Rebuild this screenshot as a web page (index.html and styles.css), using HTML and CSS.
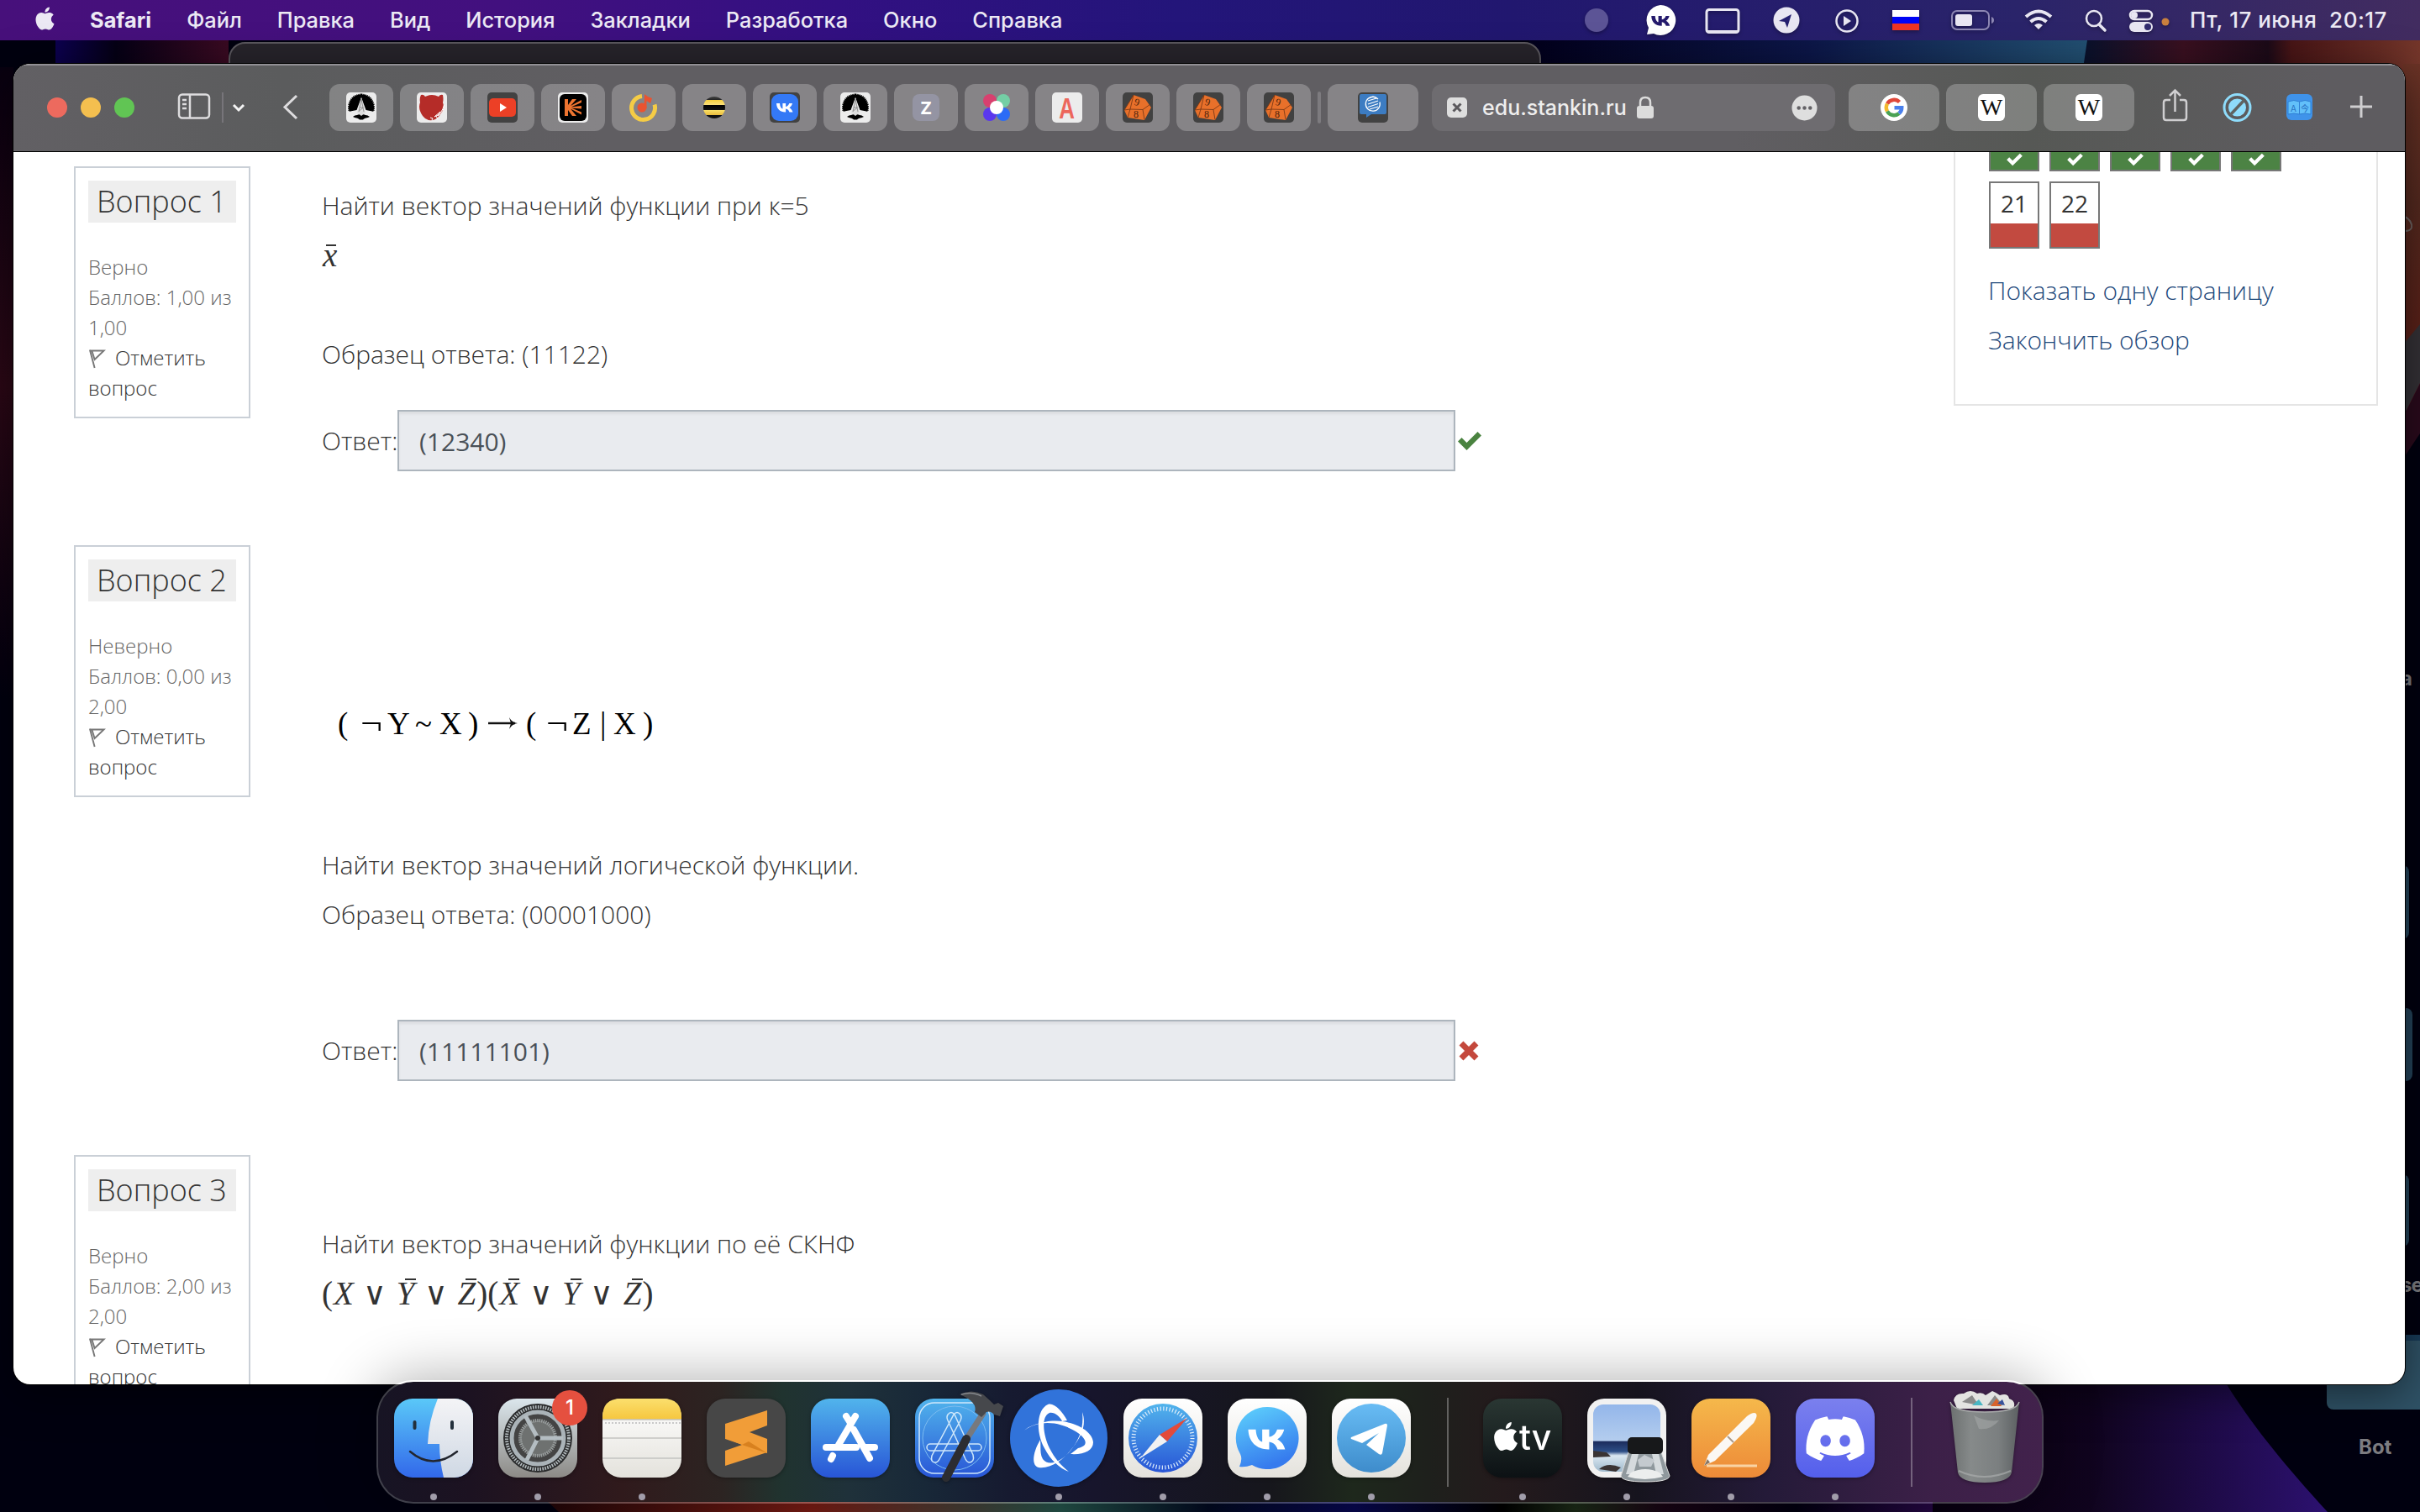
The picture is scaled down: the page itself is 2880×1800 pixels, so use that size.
FILE: index.html
```html
<!DOCTYPE html>
<html lang="ru">
<head>
<meta charset="utf-8">
<title>edu.stankin.ru</title>
<link rel="stylesheet" href="styles.css">
</head>
<body>
<svg class="defs" width="0" height="0">
  <defs>
    <linearGradient id="finderL" x2="0" y2="1"><stop stop-color="#5ac8f8"/><stop offset="1" stop-color="#3268ea"/></linearGradient>
    <linearGradient id="finderR" x2="0" y2="1"><stop stop-color="#f4f4f6"/><stop offset="1" stop-color="#cfd8e4"/></linearGradient>
    <linearGradient id="prefs" x2="0" y2="1"><stop stop-color="#dbe6ec"/><stop offset="1" stop-color="#8c8a86"/></linearGradient>
    <linearGradient id="yellow" x2="0" y2="1"><stop stop-color="#fbdf6d"/><stop offset="1" stop-color="#f6c63e"/></linearGradient>
    <linearGradient id="paper" x2="0" y2="1"><stop stop-color="#fff"/><stop offset="1" stop-color="#e4e2dc"/></linearGradient>
    <linearGradient id="blue" x2="0" y2="1"><stop stop-color="#51b4ec"/><stop offset="1" stop-color="#2855d6"/></linearGradient>
    <linearGradient id="vkblue" x2=".4" y2="1"><stop stop-color="#5fd4fd"/><stop offset="1" stop-color="#367bee"/></linearGradient>
    <linearGradient id="tgblue" x2="0" y2="1"><stop stop-color="#68bcf4"/><stop offset="1" stop-color="#3e8ccb"/></linearGradient>
    <linearGradient id="tvbg" x2="0" y2="1"><stop stop-color="#2a3733"/><stop offset="1" stop-color="#0c1114"/></linearGradient>
    <linearGradient id="orange" x2="0" y2="1"><stop stop-color="#f5b84b"/><stop offset="1" stop-color="#ed8a38"/></linearGradient>
    <linearGradient id="blurple" x2="0" y2="1"><stop stop-color="#7b80ee"/><stop offset="1" stop-color="#545fec"/></linearGradient>
    <linearGradient id="bin" x2="1" y2="0"><stop stop-color="#6c7070"/><stop offset=".3" stop-color="#868a8a"/><stop offset=".7" stop-color="#7b7f80"/><stop offset="1" stop-color="#5c6062"/></linearGradient>
    <linearGradient id="sky" x2="0" y2="1"><stop stop-color="#93b6ea"/><stop offset=".54" stop-color="#b4cdee"/><stop offset=".55" stop-color="#1c2c5c"/><stop offset=".7" stop-color="#2d4e86"/><stop offset=".76" stop-color="#dbe8f2"/><stop offset="1" stop-color="#9fb9cc"/></linearGradient>
    <linearGradient id="bee" x2="0" y2="1"><stop stop-color="#444"/><stop offset=".16" stop-color="#222"/><stop offset=".16" stop-color="#f7d13f"/><stop offset=".38" stop-color="#fbe07a"/><stop offset=".38" stop-color="#000"/><stop offset=".6" stop-color="#111"/><stop offset=".6" stop-color="#fbe36a"/><stop offset=".86" stop-color="#e8b93a"/><stop offset=".86" stop-color="#111"/></linearGradient>
    <symbol id="apple" viewBox="0 0 24 24"><path fill="currentColor" d="M12.152 6.896c-.948 0-2.415-1.078-3.96-1.04-2.04.027-3.91 1.183-4.961 3.014-2.117 3.675-.546 9.103 1.519 12.09 1.013 1.454 2.208 3.09 3.792 3.039 1.52-.065 2.09-.987 3.935-.987 1.831 0 2.35.987 3.96.948 1.637-.026 2.676-1.48 3.676-2.948 1.156-1.688 1.636-3.325 1.662-3.415-.039-.013-3.182-1.221-3.22-4.857-.026-3.04 2.48-4.494 2.597-4.559-1.429-2.09-3.623-2.324-4.39-2.376-2-.156-3.675 1.09-4.61 1.09zM15.53 3.83c.843-1.012 1.4-2.427 1.245-3.83-1.207.052-2.662.805-3.532 1.818-.78.896-1.454 2.338-1.273 3.714 1.338.104 2.715-.688 3.559-1.701"/></symbol>
    <symbol id="vk" viewBox="0 0 24 24"><path fill="currentColor" d="M2 7h4c.2 4.2 1.9 6.2 3.4 6.6V7h3.7v3.9c2.3-.3 3.6-2 4.2-3.9h3.7c-.6 2.4-2 4.3-3.6 5.2 1.6.8 3.4 2.5 4.1 5.3h-4c-.7-2.1-2.2-3.6-4.4-3.9v3.9h-.5C6.5 17.5 2.2 13.6 2 7z"/></symbol>
    <symbol id="stankin" viewBox="0 0 36 36"><rect width="36" height="36" rx="5" fill="#ececec"/><path d="M18 2.500C8.500 2.500 3 10 3 18c0 2 .4 3.500.8 4.800L12.500 21 18 6l5.500 15 8.700 1.800c.4-1.300.8-2.800.8-4.800 0-8-5.500-15.500-15-15.500z"/><path d="M18 2.500C8.500 2.500 3 10 3 18c0 2 .4 3.500.8 4.800M18 2.500c9.500 0 15 7.500 15 15.500 0 2-.4 3.500-.8 4.800" fill="none" stroke="#000" stroke-width="2" stroke-dasharray="1.200 1"/><path d="M8 29c3-2.500 7-2 10-3.500 3 1.500 7 1 10 3.500-3 2-6 1-8 3.500h-4c-2-2.500-5-1.500-8-3.500z"/><path d="M18 6l-5 18 5 4 5-4z" fill="#ddd"/><path d="M18 8l-3 15M18 8l3 15M16 18h4M15.500 22l5-4" stroke="#777" stroke-width=".7"/></symbol>
    <symbol id="dice" viewBox="0 0 36 36"><rect width="36" height="36" rx="5" fill="#414141"/><path d="M13 3l14 5 7 10-8 15-20-3-4-9z" fill="#e8702a"/><path d="M13 3L9 20l-7 1M9 20l15 .5L33 14M24 20.500l2 12M9 20l-3 10M13 3l-3 5-8 13" fill="none" stroke="#6e3414" stroke-width=".8"/><text x="14" y="15.500" class="pip" transform="rotate(14 17 12)">9</text><text x="13" y="30" class="pip">8</text></symbol>
    <symbol id="flag" viewBox="0 0 22 26"><path d="M2 1.500L8 24M2.500 2.500h17L8 13.500 4.500 2.500" fill="none" stroke="#777" stroke-width="2"/></symbol>
    <symbol id="check" viewBox="0 0 30 24"><path fill="currentColor" d="M1 12.500l4.500-4.500 6 6L24.500 1l4.500 4.500-17.500 17.500z"/></symbol>
  </defs>
</svg>

<div class="desktop">
  <svg class="wallpaper" viewBox="0 0 2880 1800">
    <defs>
      <linearGradient id="w1" x2="1" y2="0"><stop stop-color="#02001c"/><stop offset=".5" stop-color="#0c1648"/><stop offset="1" stop-color="#225072"/></linearGradient>
      <linearGradient id="w2" x2="1" y2="0"><stop stop-color="#08112c"/><stop offset=".3" stop-color="#3a1020"/><stop offset=".55" stop-color="#1c0a18"/><stop offset=".62" stop-color="#481516"/><stop offset="1" stop-color="#74362a"/></linearGradient>
      <linearGradient id="w3" x2="0" y2="1"><stop stop-color="#6b3326"/><stop offset=".5" stop-color="#54291f"/><stop offset="1" stop-color="#5a2018"/></linearGradient>
      <linearGradient id="w4" x2="1" y2="0"><stop stop-color="#080010"/><stop offset=".4" stop-color="#10041e"/><stop offset="1" stop-color="#2c1170"/></linearGradient>
      <linearGradient id="w5" x2="1" y2="0"><stop stop-color="#0c0050"/><stop offset=".35" stop-color="#050015"/><stop offset="1" stop-color="#3a0a22"/></linearGradient>
      <linearGradient id="w6" x2="1" y2="0"><stop stop-color="#210608"/><stop offset=".18" stop-color="#7a1c14"/><stop offset=".35" stop-color="#24534a"/><stop offset=".45" stop-color="#020a20"/><stop offset=".55" stop-color="#080850"/><stop offset=".65" stop-color="#000"/><stop offset=".7" stop-color="#1c2b18"/><stop offset=".76" stop-color="#180414"/><stop offset=".85" stop-color="#020010"/><stop offset=".95" stop-color="#280848"/><stop offset="1" stop-color="#5c3a78"/></linearGradient>
      <linearGradient id="w7" x2="0" y2="1"><stop stop-color="#080010"/><stop offset=".5" stop-color="#2c0816"/><stop offset="1" stop-color="#00000f"/></linearGradient>
    </defs>
    <rect width="2880" height="1800" fill="#00000f"/>
    <rect y="80" width="16" height="760" fill="url(#w7)"/>
    <rect x="66" y="48" width="206" height="40" fill="url(#w5)"/>
    <rect x="1820" y="48" width="664" height="40" fill="url(#w1)"/>
    <path d="M2484 48h396v440h-18V88h-384z" fill="url(#w2)"/>
    <rect x="2860" y="76" width="20" height="330" fill="url(#w3)"/>
    <path d="M2860 410l20-24v70l-20 40z" fill="#343136"/>
    <path d="M2860 496l20-40v60l-20 30z" fill="#2a0a1c"/>
    <path d="M650 1786h1750v14H665z" fill="url(#w6)"/>
    <path d="M2300 1640h345c30 50 70 100 125 160h-470z" fill="url(#w4)"/>
    <g fill="#24435a"><rect x="2840" y="1030" width="27" height="88" rx="8"/><rect x="2840" y="1200" width="31" height="87" rx="8"/><rect x="2840" y="1398" width="27" height="86" rx="8"/></g>
    <rect x="2769" y="1589" width="130" height="89" rx="8" fill="#2f5266"/><rect x="2769" y="1589" width="130" height="7" fill="#183b58"/>
    <path d="M2862 258c5 2 9 8 8 13-1 3-4 4-8 4" fill="none" stroke="#6d6462" stroke-width="2"/>
  </svg>
  <span class="file-label file-a">a</span>
  <span class="file-label file-se">se</span>
  <span class="file-label file-bot">Bot</span>

  <header class="menubar">
    <svg class="mb-apple"><use href="#apple"/></svg>
    <nav class="menus"><b>Safari</b><span>Файл</span><span>Правка</span><span>Вид</span><span>История</span><span>Закладки</span><span>Разработка</span><span>Окно</span><span>Справка</span></nav>
    <svg class="status" viewBox="1880 0 710 48">
      <circle cx="1900" cy="24" r="14" fill="#5c5496"/>
      <g fill="#fff"><path d="M1976 6a18 18 0 1 1-8 34l-8 1 2-8a18 18 0 0 1 14-27z"/></g>
      <svg x="1963" y="11" width="27" height="27" color="#241a6c"><use href="#vk"/></svg>
      <rect x="2031" y="11.500" width="38" height="27" rx="3" fill="none" stroke="#e8e6f2" stroke-width="3"/><path d="M2032 36h36v3h-36z" fill="#e8e6f2"/>
      <circle cx="2126" cy="24" r="15.500" fill="#e8e6f2"/><path d="M2117 25l15-8-5 16-3-7z" fill="#241f70"/>
      <circle cx="2198" cy="25" r="12.500" fill="none" stroke="#e8e6f2" stroke-width="2.500"/><path d="M2194 19v12l9-6z" fill="#e8e6f2"/>
      <path d="M2252 12h32v8h-32z" fill="#fff"/><path d="M2252 20h32v8h-32z" fill="#0004f4"/><path d="M2252 28h32v8h-32z" fill="#ee3424"/>
      <rect x="2323" y="13" width="44" height="22" rx="6" fill="none" stroke="#8d87b4" stroke-width="2"/><rect x="2327" y="17" width="20" height="14" rx="3" fill="#e8e6f2"/><path d="M2370 20v8q3-1 3-4t-3-4" fill="#8d87b4"/>
      <g fill="none" stroke="#e8e6f2" stroke-width="4"><path d="M2411 20q15-13 30 0M2416.500 26q9.500-8 19 0"/></g><path d="M2421 30q5-4 10 0l-5 5z" fill="#e8e6f2"/>
      <circle cx="2492" cy="22" r="9" fill="none" stroke="#e8e6f2" stroke-width="2.500"/><path d="M2498 29l7 7" stroke="#e8e6f2" stroke-width="3.500" stroke-linecap="round"/>
      <rect x="2535" y="13" width="26" height="10" rx="5" fill="none" stroke="#e8e6f2" stroke-width="2.500"/><circle cx="2540" cy="18" r="4" fill="#e8e6f2"/><rect x="2534" y="26" width="28" height="12" rx="6" fill="#e8e6f2"/><circle cx="2556" cy="32" r="4" fill="#312b6e"/>
      <circle cx="2577" cy="26" r="4.500" fill="#c9803e"/>
    </svg>
    <time class="clock">Пт, 17 июня&nbsp; 20:17</time>
  </header>

  <div class="back-window"></div>

  <main class="window">
    <div class="toolbar">
      <div class="lights"><i class="red"></i><i class="amber"></i><i class="green"></i></div>
      <svg class="nav-icons" viewBox="206 100 186 56" fill="none" stroke="#dddcde" stroke-width="2.500">
        <rect x="213" y="112.500" width="36" height="28" rx="4"/><path d="M226 112v29M217 119h5M217 124h5M217 129h5"/><path d="M265 110v36" stroke="#77757a" stroke-width="2"/><path d="M278 125l6 6 6-6" stroke="#f4f4f4" stroke-width="3"/><path d="M353 114l-14 13.500 14 13.500" stroke-width="3"/>
      </svg>
      <div class="tabs">
        <div class="tab"><svg class="fav"><use href="#stankin"/></svg></div>
        <div class="tab"><svg class="fav" viewBox="0 0 36 36"><rect width="36" height="36" rx="5" fill="#ececec"/><path d="M5 3q3-1 5 2 8-4 16 0 2-3 5-2 1 5 0 9 2 6 0 10-4 7-9 10-9 4-15-4Q1 19 4 12 3 7 5 3z" fill="#b52c28"/><path d="M32.500 15q0 9-7.500 13l3-5-7 6q9-3 11.500-14M16 30l3 1-1 2M23 28l2 4" fill="#b52c28" stroke="#fff"/></svg></div>
        <div class="tab"><svg class="fav" viewBox="0 0 36 36"><rect width="36" height="36" rx="5" fill="#424242"/><rect x="2" y="7" width="32" height="22" rx="5" fill="#ec4026"/><path d="M15 13v10l8-5z" fill="#fff"/></svg></div>
        <div class="tab"><svg class="fav" viewBox="0 0 36 36"><rect width="36" height="36" rx="5" fill="#ececec"/><rect x="2" y="2" width="32" height="32" rx="6"/><path fill="#ee7430" d="M8 8h4v7l5-7h5l-7 8 13-7v3l-12 5.200 12-1.200v3.600l-12-1.200 12 5.200v3l-13-7 7 8.500h-5l-5-7v7H8z"/></svg></div>
        <div class="tab"><svg class="fav" viewBox="0 0 36 36"><path d="M16 4.500a14 14 0 1 0 15 10" fill="none" stroke="#f5cc45" stroke-width="5"/><circle cx="16" cy="18" r="5.500" fill="#ea5330"/><path d="M19 2q4 4 9 5l-2 6q-3-2-4.500-3v9h-3z" fill="#ea5330"/></svg></div>
        <div class="tab"><svg class="fav" viewBox="0 0 36 36"><circle cx="18" cy="18" r="13" fill="url(#bee)"/></svg></div>
        <div class="tab"><svg class="fav" viewBox="0 0 36 36"><rect width="36" height="36" rx="5" fill="#424242"/><rect x="2" y="2" width="32" height="32" rx="9" fill="#3479f6"/><svg x="6" y="6" width="24" height="24" color="#fff"><use href="#vk"/></svg></svg></div>
        <div class="tab"><svg class="fav"><use href="#stankin"/></svg></div>
        <div class="tab"><svg class="fav" viewBox="0 0 36 36"><rect x="2" y="2" width="32" height="32" rx="8" fill="#9494a3"/><text x="18" y="26" class="let z">Z</text></svg></div>
        <div class="tab"><svg class="fav" viewBox="0 0 36 36"><circle cx="10" cy="10" r="8" fill="#d8406f"/><circle cx="26" cy="10" r="8" fill="#74cfa5"/><circle cx="10" cy="26" r="8" fill="#5a37ee"/><circle cx="26" cy="26" r="8" fill="#2c6bf6"/><circle cx="18" cy="18" r="8" fill="#fff"/></svg></div>
        <div class="tab"><svg class="fav" viewBox="0 0 36 36"><rect width="36" height="36" rx="5" fill="#ececec"/><text x="17.500" y="31" class="let a">A</text></svg></div>
        <div class="tab"><svg class="fav"><use href="#dice"/></svg></div>
        <div class="tab"><svg class="fav"><use href="#dice"/></svg></div>
        <div class="tab"><svg class="fav"><use href="#dice"/></svg></div>
        <i class="tab-sep"></i>
        <div class="tab wide"><svg class="fav" viewBox="0 0 36 36"><rect width="36" height="36" rx="5" fill="#424242"/><path d="M4 2h28q2 0 2 2v20q0 2-2 2H16l-6 4v-4H4q-2 0-2-2V4q0-2 2-2z" fill="#3c7cc2"/><g fill="none" stroke="#fff" stroke-width="1.300"><path d="M20 5.500a8.500 8.500 0 1 0 6 6M13 7q6-4 11 1"/><path d="M12 10l10-3M12 14l12-4M12 17.500l12-4M14 20l10-3"/></g></svg></div>
      </div>
      <div class="address">
        <svg class="close" viewBox="0 0 24 24"><rect width="24" height="24" rx="5" fill="#dedede"/><path d="M7.500 7.500l9 9M16.500 7.500l-9 9" stroke="#5b595d" stroke-width="3"/></svg>
        <span class="host">edu.stankin.ru</span>
        <svg class="lock" viewBox="0 0 20 28"><rect y="12" width="20" height="15" rx="3" fill="#dcdcdc"/><path d="M4 13V8q0-6 6-6t6 6v5" fill="none" stroke="#dcdcdc" stroke-width="2.500"/></svg>
        <svg class="more" viewBox="0 0 32 32"><circle cx="16" cy="16" r="15.500" fill="#dedede"/><g fill="#636165"><circle cx="9" cy="16" r="2.300"/><circle cx="16" cy="16" r="2.300"/><circle cx="23" cy="16" r="2.300"/></g></svg>
      </div>
      <div class="tabs pinned">
        <div class="tab wide"><svg class="site" viewBox="0 0 32 32"><circle cx="16" cy="16" r="16" fill="#fff"/><g fill="none" stroke-width="4.500"><path d="M8 11.500a9.200 9.200 0 0 1 14.500-2" stroke="#e0483a"/><path d="M8 11.500a9.200 9.200 0 0 0 0 9" stroke="#f3b92e"/><path d="M8 20.500a9.200 9.200 0 0 0 14 2.500" stroke="#4aa254"/><path d="M16.500 16.200h8.700q0 4.300-3.200 6.800" stroke="#4a80ec"/></g></svg></div>
        <div class="tab wide"><svg class="site" viewBox="0 0 32 32"><rect width="32" height="32" rx="6" fill="#fff"/><text x="16" y="25" class="let w">W</text></svg></div>
        <div class="tab wide"><svg class="site" viewBox="0 0 32 32"><rect width="32" height="32" rx="6" fill="#fff"/><text x="16" y="25" class="let w">W</text></svg></div>
      </div>
      <svg class="actions" viewBox="2560 100 280 56" fill="none" stroke="#cfced0" stroke-width="2.500">
        <path d="M2583 119h-5q-3 0-3 3v18q0 3 3 3h21q3 0 3-3v-18q0-3-3-3h-5M2588.500 133v-25M2582 114l6.500-6.500 6.500 6.500"/>
        <circle cx="2662.500" cy="128" r="15.500" stroke="#8edcfb" stroke-width="3"/><circle cx="2662.500" cy="128" r="10.500" fill="#8edcfb" stroke="none"/><path d="M2654 137l17-18" stroke="#5f6361" stroke-width="3.500"/>
        <rect x="2721" y="112" width="31" height="31" rx="6" fill="#3f93ea" stroke="none"/><path d="M2723 121q7-3 13.500 0 6.500-3 13.500 0v15q-7-2-13.500 0-6.500-2-13.500 0zM2736.500 121v15" fill="#62c0fa" stroke="#2f7fd4" stroke-width="1"/><text x="2726" y="132.500" class="tr">A</text><text x="2738" y="132.500" class="tr cjk">今</text>
        <path d="M2810 114v26M2797 127h26" stroke-width="3"/>
      </svg>
    </div>

    <div class="page">
      <div class="questions">
        <section class="question q1">
          <aside class="info"><h3>Вопрос 1</h3><div class="state">Верно<br>Баллов: 1,00 из<br>1,00</div><div class="mark"><svg class="flag"><use href="#flag"/></svg>Отметить<br>вопрос</div></aside>
          <div class="body">
            <p>Найти вектор значений функции при к=5</p>
            <p class="math"><i class="bar low">x</i></p>
            <p>&nbsp;</p>
            <p>Образец ответа: (11122)</p>
            <div class="answer"><label>Ответ:</label><div class="field">(12340)</div><svg class="ok"><use href="#check"/></svg></div>
          </div>
        </section>
        <section class="question q2">
          <aside class="info"><h3>Вопрос 2</h3><div class="state">Неверно<br>Баллов: 0,00 из<br>2,00</div><div class="mark"><svg class="flag"><use href="#flag"/></svg>Отметить<br>вопрос</div></aside>
          <div class="body">
            <div class="formula"><span>(</span><span class="not">¬</span><span>Y</span><span>~</span><span>X</span><span>)</span><svg class="arrow" viewBox="0 0 36 16"><path d="M0 8h32" stroke="#111" stroke-width="2.500"/><path d="M25 1q3 6 10 7-7 1-10 7l2-7z" fill="#111"/></svg><span>(</span><span class="not">¬</span><span>Z</span><span>|</span><span>X</span><span>)</span></div>
            <p>Найти вектор значений логической функции.</p>
            <p>Образец ответа: (00001000)</p>
            <div class="answer"><label>Ответ:</label><div class="field">(11111101)</div><svg class="bad" viewBox="0 0 24 24"><path d="M3 3l18 18M21 3L3 21" stroke="#c4483c" stroke-width="7"/></svg></div>
          </div>
        </section>
        <section class="question q3">
          <aside class="info"><h3>Вопрос 3</h3><div class="state">Верно<br>Баллов: 2,00 из<br>2,00</div><div class="mark"><svg class="flag"><use href="#flag"/></svg>Отметить<br>вопрос</div></aside>
          <div class="body">
            <p>&nbsp;</p>
            <p>Найти вектор значений функции по её СКНФ</p>
            <p class="math">(<i>X</i><b>∨</b><i class="bar">Y</i><b>∨</b><i class="bar">Z</i>)(<i class="bar">X</i><b>∨</b><i class="bar">Y</i><b>∨</b><i class="bar">Z</i>)</p>
          </div>
        </section>
      </div>
      <aside class="quiz-nav">
        <div class="cells">
          <div class="cell half"><svg><use href="#check"/></svg></div><div class="cell half"><svg><use href="#check"/></svg></div><div class="cell half"><svg><use href="#check"/></svg></div><div class="cell half"><svg><use href="#check"/></svg></div><div class="cell half"><svg><use href="#check"/></svg></div>
          <div class="cell wrong">21</div><div class="cell wrong">22</div>
        </div>
        <a>Показать одну страницу</a>
        <a>Закончить обзор</a>
      </aside>
    </div>
  </main>

  <footer class="dock">
    <div class="app on"><svg viewBox="0 0 94 94"><clipPath id="sq"><rect width="94" height="94" rx="22"/></clipPath><g clip-path="url(#sq)"><rect width="94" height="94" fill="url(#finderL)"/><path d="M52 0q-11 26-12 54h14q0 20 5 40h35V0z" fill="url(#finderR)"/></g><path d="M24.500 28v7M69 28v7" stroke="#23303c" stroke-width="4" stroke-linecap="round"/><path d="M19 63q27 23 56 0" fill="none" stroke="#23262e" stroke-width="2.500" stroke-linecap="round"/></svg></div>
    <div class="app on"><svg viewBox="0 0 94 94"><rect width="94" height="94" rx="22" fill="url(#prefs)"/><circle cx="47" cy="47" r="41" fill="#2b2c2d"/><circle cx="47" cy="47" r="37" fill="none" stroke="#b4bcbf" stroke-width="4" stroke-dasharray="1.600 1.400"/><circle cx="47" cy="47" r="31" fill="#444" stroke="#aab3b8" stroke-width="5"/><circle cx="47" cy="47" r="21" fill="#6e7170" stroke="#999e9e" stroke-width="4" stroke-dasharray="1.500 1"/><path d="M47 47h30M47 47L32 20M47 47L34 73" stroke="#b4bdc2" stroke-width="5"/><circle cx="47" cy="47" r="3" fill="#333"/></svg><b class="badge">1</b></div>
    <div class="app on"><svg viewBox="0 0 94 94"><rect width="94" height="94" rx="22" fill="url(#paper)"/><path d="M0 25v-3Q0 0 22 0h50q22 0 22 22v3z" fill="url(#yellow)"/><path d="M0 25h94M0 47h94M0 71h94" stroke="#c4c3c1" stroke-width="1.300"/><path d="M3 29h90" stroke="#bbb" stroke-width="1.500" stroke-dasharray="2 2"/></svg></div>
    <div class="app"><svg viewBox="0 0 94 94"><rect width="94" height="94" rx="22" fill="#474747"/><path d="M72 14v18L51 40l21 8v17L22 48V30z" fill="#f19d38"/><path d="M22 62l20-7-20-8 50 17-50 16z" fill="#f19d38"/><path d="M42 55l8-4 22 14z" fill="#d8811f"/></svg></div>
    <div class="app"><svg viewBox="0 0 94 94"><rect width="94" height="94" rx="22" fill="url(#blue)"/><path d="M42 21l5 8M53 21L33 55M51 37l19 34M18 58h36M66 58h10M26 68l-2 4" stroke="#fff" stroke-width="8" stroke-linecap="round"/></svg></div>
    <div class="app"><svg viewBox="0 0 94 94"><rect width="94" height="94" rx="22" fill="url(#blue)"/><rect x="5" y="5" width="84" height="84" rx="18" fill="none" stroke="#cfe8fb" stroke-width="1.500"/><circle cx="47" cy="47" r="38" fill="none" stroke="#7cbcf0"/><g fill="none" stroke="#cfe8fb" stroke-width="1.500"><path d="M39 19q4-5 8 0l22 48q2 8-4 9-3 0-5-4L39 26q-2-4 0-7zM54 19q-4-5-8 0L20 68q-2 8 4 8 3 0 5-4l25-46q2-4 0-7z"/><rect x="14" y="54" width="65" height="8" rx="4"/></g><path d="M82 16L60 50" stroke="#77797e" stroke-width="7"/><path d="M61 48L37 94" stroke="#2c2d31" stroke-width="10" stroke-linecap="round"/><path d="M53-5q14-7 28 0 8 7 13 12l5-2 6 4-4 12-7-2q-4-5-9-3l-6 6-8-6Q75 4 53-5z" fill="#46484c"/><path d="M55-5q13-4 24 2" fill="none" stroke="#85888d" stroke-width="1.500"/></svg></div>
    <div class="app on"><svg viewBox="11 11 94 94"><circle cx="58" cy="58" r="58" fill="#3173da"/><g fill="#fff"><path d="M68 37C62 26 52 15 45 18 32 24 30 50 41 70c7 14 18 24 29 28-9-7-17-16-23-28-8-17-10-38 0-42 6-1 12 4 15 10z"/><path d="M17 49c17-13 41-11 61 1 14 9 16 17 3 20l-9 7c16 1 27-4 27-14C98 46 65 33 41 39c-10 2-19 5-24 10z"/><path d="M86 27c2 18-3 32-14 46C60 87 46 92 39 83c-4-7-2-15-3-23-9 15-11 31-2 33 13 2 29-8 40-23 12-15 17-29 12-43z"/></g></svg></div>
    <div class="app on"><svg viewBox="0 0 94 94"><rect width="94" height="94" rx="22" fill="url(#paper)"/><circle cx="47" cy="47" r="41" fill="url(#blue)"/><circle cx="47" cy="47" r="35" fill="none" stroke="#dfeefb" stroke-width="5" stroke-dasharray="1.200 2.465"/><path d="M76 23L52 51l-9-8z" fill="#e24b3b"/><path d="M20 71l23-28 9 8z" fill="#f2f2f2"/></svg></div>
    <div class="app on"><svg viewBox="0 0 94 94"><rect width="94" height="94" rx="22" fill="url(#paper)"/><path d="M47 10a37 37 0 1 1-18 69q-8 3-15 2 4-9 1-15A37 37 0 0 1 47 10z" fill="url(#vkblue)"/><svg x="20" y="19" width="54" height="58" color="#fff"><use href="#vk"/></svg></svg></div>
    <div class="app on"><svg viewBox="0 0 94 94"><rect width="94" height="94" rx="22" fill="url(#paper)"/><circle cx="47" cy="47" r="41" fill="url(#tgblue)"/><path d="M23 46l40-16q3-1 3 2l-6 33q-1 3-4 1L41 55l15-14-20 12-13-5q-1-1 0-2z" fill="#fff"/></svg></div>
    <i class="dock-sep"></i>
    <div class="app on"><svg viewBox="0 0 94 94"><rect width="94" height="94" rx="22" fill="url(#tvbg)"/><svg x="10" y="27" width="34" height="36" color="#fff"><use href="#apple"/></svg><text x="43" y="61" class="tv">tv</text></svg></div>
    <div class="app on"><svg viewBox="0 0 94 94"><rect width="94" height="94" rx="20" fill="#f1f1f1"/><rect x="7" y="7" width="80" height="80" rx="12" fill="url(#sky)"/><path d="M7 62l16 2 5 5-21 1zM14 84q10-9 26-2l-6 5z" fill="#3a3434"/><path d="M49 64h39l10 28q-1 7-29 7t-29-7z" fill="#8f989d" stroke="#ddd"/><path d="M53 66h8l-6 24h-9zM77 66h8l6 24h-9z" fill="#d5dadd"/><path d="M52 88q17-8 34 0l4 5q-22 6-42 0z" fill="#eceeee"/><path d="M60 73l8-6 12 6-4 8H62z" fill="#c4cacf"/><rect x="48" y="46" width="42" height="20" rx="5" fill="#17181a"/></svg></div>
    <div class="app on"><svg viewBox="0 0 94 94"><rect width="94" height="94" rx="22" fill="url(#orange)"/><path d="M18 80h60" stroke="#f9d3a4" stroke-width="3"/><path d="M15 80l5-13L66 21q8-6 11-3 2 3-3 11L28 74z" fill="#fbf8f4"/><path d="M43 45l7 7" stroke="#a98" stroke-width="2"/><path d="M15 80l4-8 3 4z" fill="#876"/></svg></div>
    <div class="app on"><svg viewBox="0 0 94 94"><rect width="94" height="94" rx="22" fill="url(#blurple)"/><g transform="translate(12.500 13) scale(2.880)"><path fill="#fff" d="M20.317 4.370a19.790 19.790 0 0 0-4.885-1.515.074.074 0 0 0-.079.037c-.211.375-.445.865-.608 1.250-1.845-.276-3.680-.276-5.487 0-.164-.393-.406-.874-.618-1.250a.077.077 0 0 0-.078-.037 19.736 19.736 0 0 0-4.885 1.515.07.07 0 0 0-.032.028C.533 9.046-.319 13.580.099 18.058a.082.082 0 0 0 .031.056c2.053 1.508 4.041 2.423 5.993 3.029a.078.078 0 0 0 .084-.028c.462-.630.873-1.295 1.226-1.994-.693-.267-1.315-.569-1.922-.998l.372-.403c3.928 1.793 8.180 1.793 12.140 0l.450.403a12.300 12.300 0 0 1-1.920.998c.360.698.772 1.363 1.225 1.993a.076.076 0 0 0 .084.029c1.961-.607 3.950-1.522 6.002-3.029a.077.077 0 0 0 .031-.056c.500-5.177-.838-9.674-3.548-13.660zM8.020 15.331c-1.183 0-2.157-1.086-2.157-2.419s.956-2.419 2.157-2.419c1.211 0 2.176 1.095 2.157 2.419 0 1.333-.956 2.419-2.157 2.419zm7.975 0c-1.183 0-2.157-1.086-2.157-2.419s.955-2.419 2.157-2.419c1.211 0 2.176 1.095 2.157 2.419 0 1.333-.946 2.419-2.157 2.419z"/></g></svg></div>
    <i class="dock-sep sep2"></i>
    <div class="app trash"><svg viewBox="0 0 94 94"><path d="M10 2Q12-7 22-6q8-6 16 0 6-2 10 2l8-5q5 2 9 5 10-3 11 4 9 3 5 12H14z" fill="#e3e3e1"/><path d="M20 4l12-8 8 12zM50 8l9-12 10 12z" fill="#8a8a8a"/><path d="M32 8l8-7 5 7z" fill="#48b6c4"/><path d="M54 9l7-9 6 9z" fill="#d8632c"/><path d="M62 6l6-5 3 7z" fill="#38529b"/><path d="M6 4q3 11 41 12 37-1 41-12l-9 84q-3 12-32 12T15 88z" fill="url(#bin)"/><path d="M6 4q3 12 41 12T88 4" fill="none" stroke="#a9abab" stroke-width="1.500"/><path d="M34 20q14 8 30 6-10 12-24 10z" fill="#a3a6a6" opacity=".6"/><path d="M16 86q30 14 62 0" fill="none" stroke="#a9acac" stroke-width="2" opacity=".7"/></svg></div>
  </footer>
</div>
</body>
</html>
```
FILE: styles.css
```css
* { box-sizing: border-box; }
body { margin: 0; overflow: hidden; font-family: "Open Sans", "Noto Sans", sans-serif; }
svg { display: block; flex: none; overflow: visible; }
.defs { position: absolute; }
.desktop { position: relative; width: 2880px; height: 1800px; overflow: hidden; background: #00000f; }
.wallpaper { position: absolute; inset: 0; width: 2880px; height: 1800px; }
.file-label { position: absolute; font: 700 24px/28px Inter, sans-serif; color: #7c7c80; }
.file-a { left: 2857px; top: 794px; }
.file-se { left: 2857px; top: 1516px; letter-spacing: -1px; }
.file-bot { left: 2807px; top: 1709px; }

/* Menu bar */
.menubar { position: relative; display: flex; align-items: center; height: 48px; padding: 0 38px 0 40px; color: #ece9f4; font: 500 25.4px/46px Inter, sans-serif; background: linear-gradient(90deg, #47107b 0, #42107f 600px, #321082 1000px, #23157a 1400px, #21176f 1800px, #2a246a 2400px, #422c60 2880px); }
.mb-apple { width: 27px; height: 32px; margin-top: -4px; }
.menus { display: flex; gap: 42px; margin-left: 40px; }
.menus b { font-weight: 700; }
.status { width: 710px; height: 48px; margin-left: auto; filter: drop-shadow(0 2px 2px rgba(0, 0, 0, .3)); }
.clock { width: 236px; margin-left: 16px; font-size: 26px; letter-spacing: .5px; white-space: nowrap; }

/* Windows */
.back-window { position: absolute; left: 272px; top: 50px; width: 1562px; height: 60px; border-radius: 20px; background: #27242b; border: 2px solid #5b585e; }
.window { position: absolute; left: 16px; top: 76px; width: 2846px; height: 1572px; border-radius: 20px; overflow: hidden; background: #fff; box-shadow: 0 0 0 1px #000, 0 10px 50px rgba(0, 0, 0, .5); }
.toolbar { display: flex; align-items: center; height: 105px; padding: 0 22px 2px 40px; background: linear-gradient(90deg, #626064 0, #5b5c5d 320px, #605e62 700px, #605e62 2050px, #565855 2400px, #5e5c60 2750px); border-top: 2px solid #918f94; border-bottom: 1px solid #000; }
.lights { display: flex; gap: 16px; }
.lights i { width: 24px; height: 24px; border-radius: 50%; }
.red { background: #ed6a5e; }
.amber { background: #f4bf4f; }
.green { background: #61c554; }
.nav-icons { width: 186px; height: 56px; margin-left: 46px; }
.tabs { display: flex; align-items: center; gap: 8px; }
.tab { display: flex; align-items: center; justify-content: center; width: 76px; height: 56px; border-radius: 12px; background: rgba(255, 255, 255, .24); }
.tab.wide { width: 108px; }
.tab-sep { width: 4px; height: 38px; border-radius: 2px; background: #7d7b7f; }
.fav { width: 36px; height: 36px; }
.site { width: 32px; height: 32px; }
.pip { font: 400 12px "Liberation Serif", serif; fill: #4a230d; }
.let { text-anchor: middle; }
.z { font: 700 22px "Open Sans", sans-serif; fill: #fff; }
.a { font: 700 36px "Liberation Sans Narrow", "Liberation Sans", sans-serif; fill: #ec675c; transform: scaleX(.72); transform-origin: 18px 18px; }
.w { font: 28px "Liberation Serif", serif; fill: #111; }
.tr { font: 10px Inter, sans-serif; fill: #2670c4; stroke: none; }
.cjk { font-family: "Noto Sans CJK SC", sans-serif; }
.address { display: flex; align-items: center; width: 480px; height: 56px; margin: 0 16px; padding: 0 21px 0 18px; border-radius: 12px; background: #6e6c70; }
.close { width: 24px; height: 24px; }
.host { width: 172px; margin: 0 12px 0 18px; color: #eee; font: 500 25px/56px Inter, sans-serif; white-space: nowrap; }
.lock { width: 20px; height: 28px; }
.more { width: 31px; height: 31px; margin-left: auto; }
.actions { width: 280px; height: 56px; margin-left: 20px; }

/* Course page */
.page { display: flex; height: 1467px; padding: 17px 32px 0 72px; color: #333; font-weight: 300; font-size: 30px; line-height: 45px; }
.questions { width: 2237px; }
.question { display: flex; gap: 85px; }
.q1 { height: 451px; }
.q2 { height: 726px; }
.info { width: 210px; height: 300px; padding: 15px 15px 0; border: 2px solid #cad0d7; font-size: 24px; line-height: 36px; white-space: nowrap; flex: none; }
.info h3 { margin: 0 0 35px; padding-left: 10px; height: 50px; background: #eee; font-weight: 300; font-size: 36px; line-height: 50px; }
.state { color: #666; }
.flag { display: inline-block; width: 21px; height: 25px; margin-right: 11px; vertical-align: -5px; }
.body { flex: 1; padding-top: 24px; }
.body p { margin: 0 0 14px; height: 45px; white-space: nowrap; }
.math { font-family: "Liberation Serif", serif; font-size: 39px; font-weight: 400; }
.math i { display: inline-block; position: relative; margin: 0 1px; }
.math b { display: inline-block; width: 49px; text-align: center; font: 200 38px/40px "DejaVu Sans", sans-serif; }
.bar::before { content: ""; position: absolute; left: 45%; top: 5px; width: 13px; height: 2px; background: #333; }
.bar.low::before { left: 4px; top: 10px; width: 12px; }
.answer { display: flex; align-items: center; height: 73px; margin-top: 44px; }
.answer label { width: 90px; }
.field { width: 1259px; height: 73px; padding-left: 24px; border: 2px solid #adb5bd; background: #e9ebef; color: #495057; font-weight: 400; line-height: 71px; box-shadow: inset 0 3px 3px rgba(0, 0, 0, .06); }
.ok { width: 30px; height: 24px; margin-left: 2px; color: #4a8340; }
.bad { width: 24px; height: 24px; margin-left: 4px; }
.formula { display: grid; grid-template-columns: 27px 32px 33px 29px 34px 24px 45px 24px 31px 33px 16px 35px 15px; align-items: center; height: 334px; padding: 42px 0 0 19px; color: #000; font: 37px "Liberation Serif", serif; }
.not { transform: scaleX(1.25); transform-origin: 0 50%; }
.arrow { width: 36px; height: 16px; }
.q2 .answer { margin-top: 103px; }

.quiz-nav { width: 505px; height: 302px; margin-top: -17px; padding: 0 0 0 40px; border: 2px solid #e5e5e5; border-top: 0; }
.cells { display: grid; grid-template-columns: repeat(5, 60px); gap: 12px; margin-bottom: 27px; }
.cell { height: 80px; border: 2px solid #777; font-weight: 400; font-size: 28px; line-height: 49px; text-align: center; }
.half { height: 23px; border-top: 0; background: #4c8344; color: #fff; }
.half svg { width: 21px; height: 16px; margin: 1px auto 0; }
.wrong { background: linear-gradient(#fff 48px, #c24a40 48px); }
.quiz-nav a { display: block; height: 59px; margin-left: -1px; color: #1f4a7c; white-space: nowrap; }

/* Dock */
.dock { position: absolute; left: 448px; top: 1643px; width: 1984px; height: 147px; display: flex; gap: 30px; padding: 20px 0 0 19px; border-radius: 44px; border: 2px solid rgba(255, 255, 255, .25); background: linear-gradient(90deg, #171424 0, #1c1221 110px, #301a1c 290px, #2c2422 410px, #20332f 480px, #1f313a 560px, #182838 650px, #161a30 750px, #17152c 850px, #16161c 1060px, #1e281c 1160px, #1e201c 1250px, #241a1c 1340px, #16141e 1500px, #241a38 1650px, #3c2048 1850px, #42224c 1983px) padding-box; box-shadow: 0 0 70px rgba(0, 0, 0, .33); }
.app { position: relative; width: 94px; height: 126px; flex: none; }
.app > svg { width: 94px; height: 94px; filter: drop-shadow(0 1px 2px rgba(0, 0, 0, .35)); }
.on::after { content: ""; position: absolute; left: 43px; top: 113px; width: 8px; height: 8px; border-radius: 50%; background: #a19daa; }
.badge { position: absolute; left: 64px; top: -10px; width: 42px; height: 42px; border-radius: 50%; background: #e5503f; color: #fff; font: 500 24px/42px Inter, sans-serif; text-align: center; }
.dock-sep { width: 2px; height: 106px; margin: -1px 11px 0 13px; background: rgba(255, 255, 255, .3); flex: none; }
.sep2 { margin-right: 9px; }
.tv { font: 500 41px Inter, sans-serif; fill: #fff; }
```
